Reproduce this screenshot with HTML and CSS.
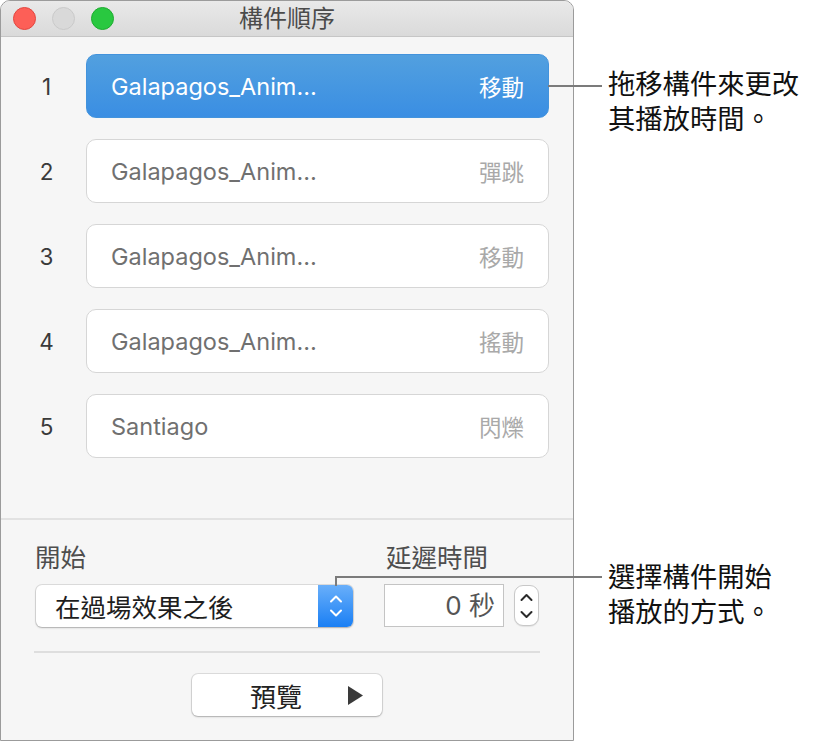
FILE: index.html
```html
<!DOCTYPE html>
<html lang="zh-Hant">
<head>
<meta charset="utf-8">
<title>構件順序</title>
<link rel="stylesheet" href="styles.css">
</head>
<body>
<div class="stage">
  <div class="window">
    <div class="titlebar">
      <div class="lights">
        <span class="light red"></span>
        <span class="light gray"></span>
        <span class="light green"></span>
      </div>
      <div class="title">構件順序</div>
    </div>
    <div class="list">
      <div class="row">
        <div class="num">1</div>
        <div class="item selected"><span class="name">Galapagos_Anim…</span><span class="effect">移動</span></div>
      </div>
      <div class="row">
        <div class="num">2</div>
        <div class="item"><span class="name">Galapagos_Anim…</span><span class="effect">彈跳</span></div>
      </div>
      <div class="row">
        <div class="num">3</div>
        <div class="item"><span class="name">Galapagos_Anim…</span><span class="effect">移動</span></div>
      </div>
      <div class="row">
        <div class="num">4</div>
        <div class="item"><span class="name">Galapagos_Anim…</span><span class="effect">搖動</span></div>
      </div>
      <div class="row">
        <div class="num">5</div>
        <div class="item"><span class="name">Santiago</span><span class="effect">閃爍</span></div>
      </div>
    </div>
    <div class="bottom">
      <div class="controls">
        <div class="label start-label">開始</div>
        <div class="label delay-label">延遲時間</div>
        <div class="popup">
          <span class="popup-text">在過場效果之後</span>
          <span class="popup-arrows">
            <svg width="14" height="28" viewBox="0 0 14 28"><path d="M2 9.5 L7 4.5 L12 9.5 M2 18.5 L7 23.5 L12 18.5" fill="none" stroke="#fff" stroke-width="2" stroke-linecap="round" stroke-linejoin="round"/></svg>
          </span>
        </div>
        <div class="field">0 秒</div>
        <div class="stepper">
          <svg width="13" height="30" viewBox="0 0 13 30"><path d="M1.5 9 L6.5 4 L11.5 9 M1.5 21 L6.5 26 L11.5 21" fill="none" stroke="#2a2a2a" stroke-width="2" stroke-linecap="round" stroke-linejoin="round"/></svg>
        </div>
      </div>
      <div class="divider"></div>
      <div class="preview-wrap">
        <div class="preview">
          <span class="preview-text">預覽</span>
          <svg class="play" width="15" height="19" viewBox="0 0 15 19"><path d="M0 0 L15 9.5 L0 19 Z" fill="#3a3a3a"/></svg>
        </div>
      </div>
    </div>
  </div>

  <div class="callout callout-drag">
    <div class="leader leader-drag"></div>
    <p class="callout-text">拖移構件來更改<br>其播放時間。</p>
  </div>
  <div class="callout callout-start">
    <div class="leader-v"></div>
    <div class="leader leader-start"></div>
    <p class="callout-text">選擇構件開始<br>播放的方式。</p>
  </div>
</div>
</body>
</html>
```

FILE: styles.css
```css
* { box-sizing: border-box; }
html, body {
  margin: 0;
  padding: 0;
  background: #ffffff;
}
body {
  font-family: "Inter", "Noto Sans CJK TC", sans-serif;
  color: #222;
}
.stage {
  position: relative;
  width: 814px;
  height: 742px;
}
.window {
  width: 574px;
  height: 741px;
  border: 1px solid #9b9b9b;
  border-radius: 10px 10px 0 0;
  background: #f6f6f6;
  display: flex;
  flex-direction: column;
  overflow: hidden;
}
.titlebar {
  height: 36px;
  flex: none;
  background: linear-gradient(#e9e9e9, #dadada);
  border-bottom: 1px solid #c6c6c6;
  display: flex;
  align-items: center;
  position: relative;
}
.lights {
  display: flex;
  gap: 16px;
  padding-left: 12px;
}
.light {
  width: 23px;
  height: 23px;
  border-radius: 50%;
}
.red { background: #fd5f57; border: 1px solid #e2463f; }
.gray { background: #d9d9d9; border: 1px solid #c9c9c9; }
.green { background: #29c840; border: 1px solid #1eab2f; }
.title {
  position: absolute;
  left: 0;
  right: 0;
  text-align: center;
  font-size: 24px;
  color: #4b4b4b;
  line-height: 36px;
}
.list {
  display: flex;
  flex-direction: column;
  gap: 21px;
  padding-top: 17px;
  height: 483px;
  flex: none;
  border-bottom: 2px solid #e2e2e2;
}
.row {
  display: flex;
  align-items: center;
}
.num {
  width: 85px;
  padding-left: 6px;
  text-align: center;
  font-size: 22.5px;
  color: #3a3a3a;
}
.item {
  width: 463px;
  height: 64px;
  border: 1px solid #d6d6d6;
  border-radius: 10px;
  background: #ffffff;
  display: flex;
  align-items: center;
  justify-content: space-between;
  padding: 0 24px 0 24px;
}
.name {
  font-size: 23.5px;
  color: #707070;
}
.effect {
  font-size: 22.5px;
  color: #a9a9a9;
}
.item.selected {
  background: linear-gradient(#52a0df, #3a8ee3);
  border-color: #4393dc;
}
.item.selected .name,
.item.selected .effect {
  color: #ffffff;
}
.bottom {
  padding: 24px 33px 0 34px;
  display: flex;
  flex-direction: column;
}
.controls {
  display: grid;
  grid-template-columns: 318px 151px 35px;
  grid-template-rows: 28px 43px;
  row-gap: 12px;
  align-items: center;
}
.label {
  font-size: 25.5px;
  color: #4e4e4e;
  line-height: 28px;
}
.start-label { grid-column: 1; padding-left: 0; }
.delay-label { grid-column: 2 / span 2; margin-left: 33px; }
.popup {
  grid-column: 1;
  height: 42px;
  background: #ffffff;
  border-radius: 6px;
  box-shadow: 0 0 0 1px rgba(0,0,0,0.10), 0 1px 2px rgba(0,0,0,0.22);
  display: flex;
  align-items: center;
  justify-content: space-between;
  overflow: hidden;
  margin-left: 1px;
}
.popup-text {
  padding-left: 19px;
  font-size: 25.5px;
  color: #1e1e1e;
}
.popup-arrows {
  width: 35px;
  height: 42px;
  background: linear-gradient(#69affa, #1a7ff4);
  display: flex;
  align-items: center;
  justify-content: center;
}
.field {
  grid-column: 2;
  margin-left: 31px;
  width: 120px;
  height: 43px;
  border: 1px solid #c4c4c4;
  background: #ffffff;
  font-size: 26px;
  color: #555;
  text-align: right;
  padding-right: 8px;
  line-height: 41px;
}
.stepper {
  grid-column: 3;
  margin-left: 10px;
  width: 25px;
  height: 41px;
  border: 1px solid #c8c8c8;
  border-radius: 9px;
  background: #ffffff;
  box-shadow: 0 1px 1px rgba(0,0,0,0.08);
  display: flex;
  align-items: center;
  justify-content: center;
}
.divider {
  margin-top: 24px;
  height: 2px;
  background: #dedede;
  width: 506px;
  margin-left: -1px;
}
.preview-wrap {
  display: flex;
  padding-left: 157px;
  margin-top: 21px;
}
.preview {
  width: 190px;
  height: 42px;
  background: #ffffff;
  border-radius: 6px;
  box-shadow: 0 0 0 1px rgba(0,0,0,0.10), 0 1px 2px rgba(0,0,0,0.22);
  display: flex;
  align-items: center;
  padding-left: 58px;
  gap: 46px;
}
.preview-text {
  font-size: 26px;
  color: #222;
}
.callout-text {
  margin: 0;
  font-size: 27.3px;
  line-height: 35px;
  color: #111;
}
.callout {
  position: absolute;
}
.callout-drag {
  left: 548px;
  top: 67px;
  display: flex;
  align-items: flex-start;
}
.leader {
  height: 2px;
  background: #7b7b7b;
}
.leader-drag {
  width: 54px;
  margin-top: 18px;
  margin-right: 6px;
}
.callout-start {
  left: 335px;
  top: 560px;
  display: flex;
  align-items: flex-start;
}
.leader-v {
  position: absolute;
  left: 0;
  top: 16px;
  width: 2px;
  height: 10px;
  background: #7b7b7b;
}
.leader-start {
  width: 267px;
  margin-top: 16px;
  margin-right: 6px;
}
```
